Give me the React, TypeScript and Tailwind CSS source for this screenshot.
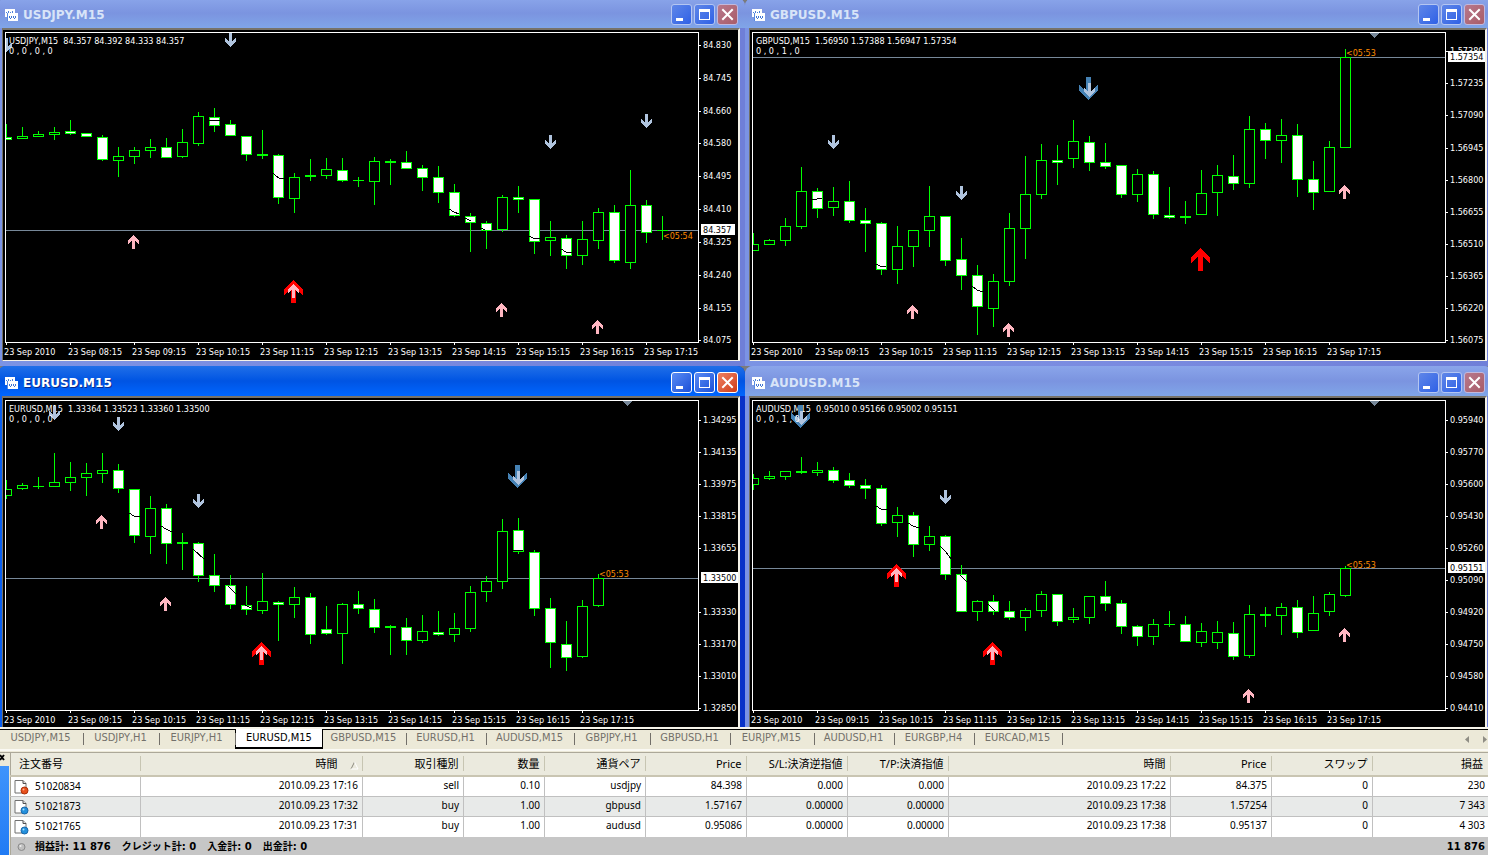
type Candle = [high: number, top: number, bottom: number, low: number, bear?: number];
type Arrow = [kind: "up" | "down" | "bigUp" | "bigDown", x: number, y: number];

type Chart = {
  symbol: string;
  active?: boolean;
  quotes: string;
  counts: string;
  candles: Candle[];
  arrows: Arrow[];
  average: string[];
  priceY: number;
  price: string;
  timer: string;
  timerX: number;
  timerY: number;
  shift?: boolean;
  badgeWidth: number;
  scale: [string, number][];
  times: string[];
};

const hours = (from: number) => [
  "23 Sep 2010",
  ...Array.from({ length: 18 - from }, (_, i) => `23 Sep ${String(from + i).padStart(2, "0")}:15`),
];

const charts: Chart[] = [
  {
    symbol: "USDJPY,M15",
    quotes: "84.357 84.392 84.333 84.357",
    counts: "0 , 0 , 0 , 0",
    candles: [
      [124, 137, 139, 139, 1], [127, 136, 138, 138], [131, 134, 136, 136], [127, 132, 134, 139],
      [120, 131, 133, 134, 1], [133, 133, 136, 136, 1], [135, 137, 159, 160, 1], [147, 156, 160, 176],
      [147, 150, 156, 163], [139, 147, 150, 157], [138, 147, 157, 157, 1], [129, 142, 156, 157],
      [112, 116, 143, 145], [108, 117, 125, 131, 1], [120, 124, 135, 135, 1], [136, 136, 154, 160, 1],
      [130, 154, 155, 158], [154, 155, 197, 203, 1], [173, 177, 198, 212], [159, 175, 176, 180],
      [158, 169, 175, 178], [158, 170, 180, 181, 1], [177, 180, 180, 186], [157, 161, 181, 204],
      [159, 161, 162, 184], [151, 162, 168, 168, 1], [165, 168, 177, 190, 1], [166, 177, 192, 202, 1],
      [184, 192, 215, 216, 1], [213, 216, 222, 251, 1], [221, 223, 230, 248, 1], [195, 197, 229, 231],
      [186, 197, 199, 212, 1], [199, 199, 241, 253, 1], [221, 237, 240, 255], [235, 238, 255, 268, 1],
      [221, 239, 255, 264], [208, 212, 240, 248], [205, 212, 260, 262, 1], [170, 205, 262, 268],
      [200, 205, 232, 242, 1], [216, 230, 230, 239],
    ],
    arrows: [
      ["down", 1, 38], ["down", 225, 33], ["up", 128, 235], ["bigUp", 284, 280], ["up", 288, 284],
      ["down", 545, 135], ["down", 641, 114], ["up", 496, 303], ["up", 592, 320],
    ],
    average: [
      "209,120 220,120", "273,173 276,176 279,178 284,179", "449,209 454,212 459,214",
      "465,218 471,221", "481,228 485,230", "529,236 533,238 540,239", "561,249 566,252 572,253",
    ],
    priceY: 230,
    price: "84.357",
    timer: "<05:54",
    timerX: 663,
    timerY: 239,
    badgeWidth: 34,
    scale: [
      ["84.830", 45], ["84.745", 78], ["84.660", 111], ["84.580", 143], ["84.495", 176],
      ["84.410", 209], ["84.325", 242], ["84.240", 275], ["84.155", 308], ["84.075", 340],
    ],
    times: hours(8),
  },
  {
    symbol: "GBPUSD,M15",
    quotes: "1.56950 1.57388 1.56947 1.57354",
    counts: "0 , 0 , 1 , 0",
    candles: [
      [233, 244, 250, 250], [239, 240, 244, 244], [218, 226, 240, 245], [167, 191, 226, 228],
      [188, 191, 208, 217, 1], [187, 201, 207, 215], [181, 201, 220, 222, 1], [208, 220, 223, 251, 1],
      [222, 223, 269, 274, 1], [226, 246, 269, 283], [230, 230, 246, 266], [186, 216, 230, 246],
      [216, 216, 260, 265, 1], [238, 259, 275, 289, 1], [265, 275, 306, 334, 1], [274, 281, 308, 326],
      [213, 228, 281, 285], [156, 194, 228, 258], [144, 160, 194, 198], [145, 160, 162, 184, 1],
      [120, 141, 158, 167], [136, 142, 162, 170, 1], [143, 162, 166, 168, 1], [165, 165, 194, 197, 1],
      [169, 174, 194, 201], [171, 174, 214, 218, 1], [187, 215, 217, 218, 1], [201, 216, 217, 223],
      [170, 193, 214, 214], [165, 175, 192, 215], [155, 176, 183, 189, 1], [116, 129, 183, 187],
      [123, 129, 140, 158, 1], [119, 135, 140, 162], [124, 135, 179, 196, 1], [161, 179, 192, 209, 1],
      [141, 147, 191, 191], [49, 57, 147, 147],
    ],
    arrows: [
      ["down", 81, 135], ["down", 209, 186], ["bigDown", 332, 77], ["down", 337, 83],
      ["up", 160, 305], ["up", 256, 323], ["bigUp", 444, 248], ["up", 592, 185],
    ],
    average: ["65,199 70,199 75,198", "129,264 133,266 139,266", "225,286 230,290 236,292"],
    priceY: 57,
    price: "1.57354",
    timer: "<05:53",
    timerX: 599,
    timerY: 56,
    shift: true,
    badgeWidth: 37,
    scale: [
      ["1.57380", 51], ["1.57235", 83], ["1.57090", 115], ["1.56945", 148], ["1.56800", 180],
      ["1.56655", 212], ["1.56510", 244], ["1.56365", 276], ["1.56220", 308], ["1.56075", 340],
    ],
    times: hours(9),
  },
  {
    symbol: "EURUSD,M15",
    active: true,
    quotes: "1.33364 1.33523 1.33360 1.33500",
    counts: "0 , 0 , 0 , 0",
    candles: [
      [112, 121, 127, 130], [115, 117, 120, 121], [109, 118, 118, 120], [85, 114, 118, 118],
      [94, 109, 114, 122], [95, 105, 109, 127], [85, 102, 105, 114], [96, 102, 120, 124, 1],
      [121, 121, 167, 174, 1], [128, 140, 168, 185], [136, 140, 175, 195, 1], [165, 174, 175, 201],
      [174, 175, 207, 213, 1], [186, 207, 217, 223, 1], [207, 217, 236, 240, 1], [218, 237, 241, 246, 1],
      [205, 233, 242, 245], [233, 234, 236, 272, 1], [219, 229, 236, 249], [225, 229, 266, 275, 1],
      [238, 261, 265, 266, 1], [235, 236, 265, 295], [223, 236, 240, 245, 1], [231, 241, 259, 264, 1],
      [257, 258, 259, 286], [250, 259, 272, 286, 1], [247, 263, 272, 274], [243, 264, 266, 267, 1],
      [245, 260, 266, 273], [218, 224, 260, 263], [208, 213, 223, 233], [151, 163, 213, 220],
      [150, 162, 183, 185, 1], [182, 184, 240, 247, 1], [230, 240, 274, 299, 1], [253, 276, 289, 302, 1],
      [232, 238, 288, 289], [206, 210, 237, 238],
    ],
    arrows: [
      ["down", 49, 38], ["down", 113, 49], ["down", 193, 126], ["up", 96, 147], ["up", 160, 229],
      ["bigUp", 252, 274], ["up", 256, 278], ["bigDown", 508, 97], ["down", 513, 103],
    ],
    average: [
      "129,145 134,148 140,149", "161,158 166,161 172,164", "193,181 204,191",
      "228,218 236,226", "245,237 251,240", "512,183 523,182",
    ],
    priceY: 210,
    price: "1.33500",
    timer: "<05:53",
    timerX: 599,
    timerY: 209,
    shift: true,
    badgeWidth: 37,
    scale: [
      ["1.34295", 52], ["1.34135", 84], ["1.33975", 116], ["1.33815", 148], ["1.33655", 180],
      ["1.33330", 244], ["1.33170", 276], ["1.33010", 308], ["1.32850", 340],
    ],
    times: hours(9),
  },
  {
    symbol: "AUDUSD,M15",
    quotes: "0.95010 0.95166 0.95002 0.95151",
    counts: "0 , 0 , 1 , 0",
    candles: [
      [106, 110, 116, 121], [103, 108, 110, 111], [103, 103, 108, 111], [89, 103, 104, 105],
      [94, 102, 104, 107], [99, 102, 112, 114, 1], [105, 112, 117, 119, 1], [111, 117, 120, 130, 1],
      [117, 120, 155, 157, 1], [139, 147, 154, 168], [144, 147, 176, 188, 1], [158, 168, 176, 182],
      [167, 168, 206, 211, 1], [197, 206, 243, 243, 1], [232, 233, 243, 252], [227, 233, 243, 246, 1],
      [233, 243, 249, 251, 1], [240, 242, 249, 262], [223, 226, 242, 248], [226, 226, 253, 257, 1],
      [240, 249, 251, 254], [228, 228, 249, 255], [213, 228, 235, 242, 1], [232, 235, 258, 265, 1],
      [257, 258, 268, 277, 1], [251, 256, 268, 276], [243, 256, 256, 258], [248, 256, 273, 273, 1],
      [255, 263, 274, 278], [253, 264, 274, 280], [254, 265, 288, 291, 1], [237, 246, 287, 289],
      [239, 246, 247, 258], [235, 239, 247, 266], [232, 239, 264, 269, 1], [228, 245, 262, 262],
      [224, 226, 243, 247], [198, 200, 227, 228],
    ],
    arrows: [
      ["bigDown", 44, 37], ["down", 49, 43], ["down", 193, 122], ["bigUp", 140, 196], ["up", 144, 200],
      ["bigUp", 236, 274], ["up", 240, 278], ["up", 592, 260], ["up", 496, 321],
    ],
    average: [
      "129,138 134,141 140,142", "161,155 166,158 172,160", "193,178 199,184 204,191",
      "213,207 220,214", "241,236 248,243",
    ],
    priceY: 200,
    price: "0.95151",
    timer: "<05:53",
    timerX: 599,
    timerY: 200,
    shift: true,
    badgeWidth: 37,
    scale: [
      ["0.95940", 52], ["0.95770", 84], ["0.95600", 116], ["0.95430", 148], ["0.95260", 180],
      ["0.95090", 212], ["0.94920", 244], ["0.94750", 276], ["0.94580", 308], ["0.94410", 340],
    ],
    times: hours(9),
  },
];

const arrowShapes = {
  up: { color: "#ffb6c1", path: "M5.5 0 11 5.5V9L7 6V14H4V6L0 9V5.5Z" },
  down: { color: "#b0c4de", path: "M5.5 14 11 8.5V5L7 8V0H4V8L0 5V8.5Z" },
  bigUp: { color: "#ff0000", path: "M9.5 0 19 9.5V15L12 9V23H7V9L0 15V9.5Z" },
  bigDown: { color: "#4682b4", path: "M9.5 23 19 13.5V8L12 14V0H7V14L0 8V13.5Z" },
};

const tabs = [
  { label: "USDJPY,M15", width: "w-[84px]" },
  { label: "USDJPY,H1", width: "w-[76px]" },
  { label: "EURJPY,H1", width: "w-[76px]" },
  { label: "EURUSD,M15", width: "w-[88px]" },
  { label: "GBPUSD,M15", width: "w-[84px]" },
  { label: "EURUSD,H1", width: "w-[80px]" },
  { label: "AUDUSD,M15", width: "w-[88px]" },
  { label: "GBPJPY,H1", width: "w-[76px]" },
  { label: "GBPUSD,H1", width: "w-[80px]" },
  { label: "EURJPY,M15", width: "w-[84px]" },
  { label: "AUDUSD,H1", width: "w-[80px]" },
  { label: "EURGBP,H4", width: "w-[80px]" },
  { label: "EURCAD,M15", width: "w-[88px]" },
];

const columns = [
  { label: "注文番号", width: "w-[130px]" },
  { label: "時間", width: "w-[222px]" },
  { label: "取引種別", width: "w-[101px]" },
  { label: "数量", width: "w-[81px]" },
  { label: "通貨ペア", width: "w-[101px]" },
  { label: "Price", width: "w-[101px]" },
  { label: "S/L:決済逆指値", width: "w-[101px]" },
  { label: "T/P:決済指値", width: "w-[101px]" },
  { label: "時間", width: "w-[222px]" },
  { label: "Price", width: "w-[101px]" },
  { label: "スワップ", width: "w-[101px]" },
  { label: "損益", width: "w-auto" },
];

const orders = [
  ["51020834", "2010.09.23 17:16", "sell", "0.10", "usdjpy", "84.398", "0.000", "0.000", "2010.09.23 17:22", "84.375", "0", "230"],
  ["51021873", "2010.09.23 17:32", "buy", "1.00", "gbpusd", "1.57167", "0.00000", "0.00000", "2010.09.23 17:38", "1.57254", "0", "7 343"],
  ["51021765", "2010.09.23 17:31", "buy", "1.00", "audusd", "0.95086", "0.00000", "0.00000", "2010.09.23 17:38", "0.95137", "0", "4 303"],
];

export default function App() {
  return (
    <div className="flex flex-col bg-[#ece9d8] font-['Noto_Sans','Noto_Sans_CJK_JP',sans-serif] text-black">
      <main className="overflow-hidden bg-[#7b7b7b]">
        <div className="-mt-[2px] -mr-[4px] -mb-[7px] -ml-[2px] grid grid-cols-2">
          {charts.map((chart) => (
            <ChartWindow key={chart.symbol} chart={chart} />
          ))}
        </div>
      </main>
      <TabBar />
      <Terminal />
    </div>
  );
}

function ChartWindow({ chart }: { chart: Chart }) {
  const frame = chart.active
    ? "bg-linear-to-r from-[#0a5ff0] via-[#0a4fe0] to-[#0831c8]"
    : "bg-linear-to-r from-[#7b93e4] via-[#7a8be0] to-[#6f7fd8]";
  const bar = chart.active
    ? "bg-linear-to-b from-[#1f6fe8] via-[#0054e3] to-[#0066ff] text-white [text-shadow:1px_1px_#0a2a8a]"
    : "bg-linear-to-b from-[#8aa5ea] via-[#7b94e0] to-[#80a5e8] text-[#d8e4f8]";

  return (
    <section className={`flex h-[368px] flex-col overflow-hidden rounded-t-lg ${frame}`}>
      <header className={`flex h-[30px] shrink-0 items-center pr-[7px] pl-[7px] pt-[3px] ${bar}`}>
        <ChartIcon />
        <h2 className="ml-[4px] flex-1 font-['DejaVu_Sans'] text-[12px] leading-[14px] font-bold">
          {chart.symbol.replace(",", ".")}
        </h2>
        <div className="flex gap-[2px]">
          <CaptionButton label="Minimize" active={chart.active}>
            <path d="M5 14h7v3H5z" fill="#fff" />
          </CaptionButton>
          <CaptionButton label="Maximize" active={chart.active}>
            <path d="M5 5h11v11H5zM6 8v7h9V8z" fill="#fff" fillRule="evenodd" />
          </CaptionButton>
          <CaptionButton label="Close" active={chart.active} close>
            <path d="M6 6l9 9M15 6l-9 9" stroke="#fff" strokeWidth="2" strokeLinecap="square" />
          </CaptionButton>
        </div>
      </header>
      <div className="mr-[5px] mb-[5px] ml-[4px] flex-1 overflow-hidden border-t-2 border-r-2 border-b border-l border-t-[#77736a] border-r-[#f4f2e8] border-b-[#f4f2e8] border-l-[#716f64] bg-black">
        <PriceChart chart={chart} />
      </div>
    </section>
  );
}

type CaptionButtonProps = {
  label: string;
  active?: boolean;
  close?: boolean;
  children: React.ReactNode;
};

function CaptionButton({ label, active, close, children }: CaptionButtonProps) {
  let color = "border-[#b4c6f2] bg-linear-to-br from-[#5f86e8] to-[#2f60e6]";
  if (active) color = "border-white bg-linear-to-br from-[#5a8bf4] to-[#1c4fd8]";
  if (close) color = "border-[#c2b8dc] bg-linear-to-br from-[#b8788c] to-[#a85c68]";
  if (close && active) color = "border-white bg-linear-to-br from-[#ee8062] to-[#cf3a10]";

  return (
    <button aria-label={label} className={`size-[21px] rounded-[3px] border ${color}`}>
      <svg viewBox="1 1 19 19" className="size-[19px]" fill="none">
        {children}
      </svg>
    </button>
  );
}

function ChartIcon() {
  return (
    <svg width="14" height="14" viewBox="0 0 14 14" shapeRendering="crispEdges">
      <path d="M0 1h10v8H0z" fill="#fff" />
      <path d="M1 4h1v1H1zM3 3h1v2H3zM5 4h1v1H5zM7 3h1v2H7z" fill="#4a7fd8" />
      <path d="M2 5h11v8H2z" fill="#5a8ae0" />
      <path d="M3 5h10v8H3z" fill="#fff" />
      <path d="M4 8h1v2H4zM5 10h1v1H5zM6 8h1v2H6zM8 8h1v2H8zM9 10h1v1H9zM10 8h1v2h-1z" fill="#3f74d4" />
    </svg>
  );
}

function PriceChart({ chart }: { chart: Chart }) {
  return (
    <svg
      width="735"
      height="330"
      viewBox="3 30 735 330"
      shapeRendering="crispEdges"
      className="block font-['DejaVu_Sans_Condensed','Noto_Sans',sans-serif] text-[9px]"
      role="img"
      aria-label={chart.symbol}
    >
      {/* frame */}
      <path d="M5 32H699V343H5z" fill="#fff" />
      <path d="M6 33H698V342H6z" fill="#000" />

      {/* plot area clips whatever runs over its edge */}
      <svg x="6" y="33" width="692" height="309" viewBox="6 33 692 309">
        <rect x="6" y={chart.priceY} width="692" height="1" fill="#778899" />
        {chart.shift && <path d="M623 33h9l-4.500 5z" fill="#778899" />}
        {chart.candles.map(([high, top, bottom, low, bear], i) => {
          const x = 6 + i * 16;
          const height = bottom - top + 1;
          return (
            <g key={i}>
              <rect x={x} y={high} width="1" height={low - high + 1} fill="#00ff00" />
              <rect x={x - 5} y={top} width="11" height={height} fill="#00ff00" />
              {height > 2 && (
                <rect x={x - 4} y={top + 1} width="9" height={height - 2} fill={bear ? "#fff" : "#000"} />
              )}
            </g>
          );
        })}
        {chart.average.map((points) => (
          <polyline key={points} points={points} fill="none" stroke="#000" />
        ))}
        <text x="9" y="44" fill="#fff" className="whitespace-pre">
          {`${chart.symbol}  ${chart.quotes}`}
        </text>
        {chart.arrows.map(([kind, x, y], i) => (
          <path key={i} d={arrowShapes[kind].path} fill={arrowShapes[kind].color} transform={`translate(${x} ${y})`} />
        ))}
        <text x="9" y="54" fill="#fff">
          {chart.counts}
        </text>
        <text x={chart.timerX} y={chart.timerY} fill="#ff8c00" className="font-['DejaVu_Sans'] text-[8px]">
          {chart.timer}
        </text>
      </svg>

      {/* price scale */}
      {chart.scale.map(([label, y]) => (
        <g key={label} fill="#fff">
          <rect x="699" y={y} width="2" height="1" />
          <text x="703" y={y + 3}>
            {label}
          </text>
        </g>
      ))}
      <rect x="701" y={chart.priceY - 6} width={chart.badgeWidth} height="11" fill="#fff" />
      <text x="703" y={chart.priceY + 3} fill="#000">
        {chart.price}
      </text>

      {/* time scale */}
      {chart.times.map((label, i) => (
        <g key={label} fill="#fff">
          <rect x={6 + i * 64} y="343" width="1" height="2" />
          <text x={4 + i * 64} y="355">
            {label}
          </text>
        </g>
      ))}
    </svg>
  );
}

function TabBar() {
  return (
    <nav className="flex h-[26px] items-start border-t-2 border-b border-t-[#f6f4ea] border-b-[#aca899] font-['DejaVu_Sans_Condensed','Noto_Sans',sans-serif]">
      <div className="flex h-[22px] flex-1 border-t border-b-2 border-t-black border-b-[#faf9f3]">
        {tabs.map((tab) =>
          tab.label === "EURUSD,M15" ? (
            <button
              key={tab.label}
              className={`-mt-px -ml-px h-[20px] border border-t-0 border-b-2 border-black bg-white text-[11px] leading-[18px] ${tab.width}`}
            >
              {tab.label}
            </button>
          ) : (
            <button
              key={tab.label}
              className={`relative flex h-[18px] justify-center pr-[3px] text-[11px] leading-[16px] text-[#73706a] after:absolute after:top-[3px] after:right-0 after:h-[12px] after:w-px after:bg-[#73706a] ${tab.width}`}
            >
              {tab.label}
            </button>
          )
        )}
        <div className="ml-auto flex gap-[12px] pt-[6px] pr-[1px]">
          <button aria-label="Scroll tabs left" className="h-[7px] w-[5px]">
            <svg viewBox="0 0 5 7" className="block" fill="#8f8d84">
              <path d="M4 0v7L0 3.500z" />
            </svg>
          </button>
          <button aria-label="Scroll tabs right" className="h-[7px] w-[5px]">
            <svg viewBox="0 0 5 7" className="block" fill="#8f8d84">
              <path d="M1 0v7l4-3.500z" />
            </svg>
          </button>
        </div>
      </div>
    </nav>
  );
}

function Terminal() {
  return (
    <section className="flex">
      <aside className="flex w-[10px] flex-col">
        <button aria-label="Close terminal" className="h-[13px] w-full">
          <svg viewBox="0 0 10 13" className="block" stroke="#000" strokeWidth="2">
            <path d="M0 2l4 5M4 2l-4 5" />
          </svg>
        </button>
        <div className="mr-px flex-1 bg-linear-to-b from-[#3f94fc] to-[#1f7af4]" />
      </aside>
      <table className="min-w-0 flex-1 table-fixed border-collapse border-l border-[#aca899] text-right text-[10px] leading-[18px]">
        <thead>
          <tr className="h-[23px] border-b-2 border-[#c9c5b2] bg-[#ebeade] text-[11px]">
            {columns.map((column, i) => (
              <th
                key={i}
                scope="col"
                className={`relative overflow-hidden p-0 font-normal whitespace-nowrap after:absolute after:top-[3px] after:right-0 after:h-[15px] after:w-px after:bg-[#c7c5b2] last:after:hidden ${column.width} ${
                  i === 0 ? "pl-[8px] text-left" : "pr-[5px]"
                }`}
              >
                {column.label}
                {i === 1 && (
                  <svg width="9" height="9" viewBox="0 0 9 9" className="mr-[-1px] ml-[12px] inline-block" fill="none">
                    <path d="M1 8L4.500 1" stroke="#8a887c" />
                    <path d="M4.500 1L8 8H1" stroke="#fff" />
                  </svg>
                )}
              </th>
            ))}
          </tr>
        </thead>
        <tbody>
          {orders.map((order, row) => (
            <tr
              key={order[0]}
              className={`h-[20px] border-b border-[#c0c0c0] last:border-b-0 ${row === 1 ? "bg-[#e8eae9]" : "bg-white"}`}
            >
              {order.map((cell, i) =>
                i === 0 ? (
                  <td key={i} className="border-r border-[#c0c0c0] p-0 pl-[3px]">
                    <div className="flex items-center gap-[6px] leading-[16px]">
                      <OrderIcon sell={order[2] === "sell"} />
                      <span className="pb-[2px]">{cell}</span>
                    </div>
                  </td>
                ) : (
                  <td key={i} className="border-r border-[#c0c0c0] p-0 pr-[4px] pb-[3px] leading-[16px] last:border-r-0 last:pr-[3px]">
                    {cell}
                  </td>
                )
              )}
            </tr>
          ))}
        </tbody>
        <tfoot>
          <tr className="h-[20px] bg-[#c6c6c6] font-['DejaVu_Sans','Noto_Sans_CJK_JP',sans-serif] font-bold">
            <td colSpan={11} className="p-0">
              <div className="flex items-center gap-[9px] pl-[6px] leading-[16px]">
                <svg width="9" height="9" viewBox="0 0 9 9">
                  <circle cx="4.500" cy="5" r="3.500" fill="#c0c0c0" stroke="#8a8a8a" />
                  <circle cx="3.500" cy="4" r="1" fill="#eee" />
                </svg>
                <span className="flex gap-[11px]">
                  <span>損益計: 11 876</span>
                  <span>クレジット計: 0</span>
                  <span>入金計: 0</span>
                  <span>出金計: 0</span>
                </span>
              </div>
            </td>
            <td className="p-0 pr-[3px] leading-[16px]">11 876</td>
          </tr>
        </tfoot>
      </table>
    </section>
  );
}

function OrderIcon({ sell }: { sell: boolean }) {
  return (
    <svg width="15" height="16" viewBox="0 0 15 16">
      <path d="M1 1.500h8l3 3V14H1z" fill="#fff" stroke="#707070" />
      <path d="M9 1.500v3h3" fill="#ddd" stroke="#505050" />
      <circle cx="10.500" cy="11.500" r="3.500" fill={sell ? "#e8501c" : "#2390dc"} stroke={sell ? "#a83008" : "#1a66a8"} />
      <circle cx="9.500" cy="10.500" r="1" fill={sell ? "#ffb090" : "#a8e0ff"} />
    </svg>
  );
}
